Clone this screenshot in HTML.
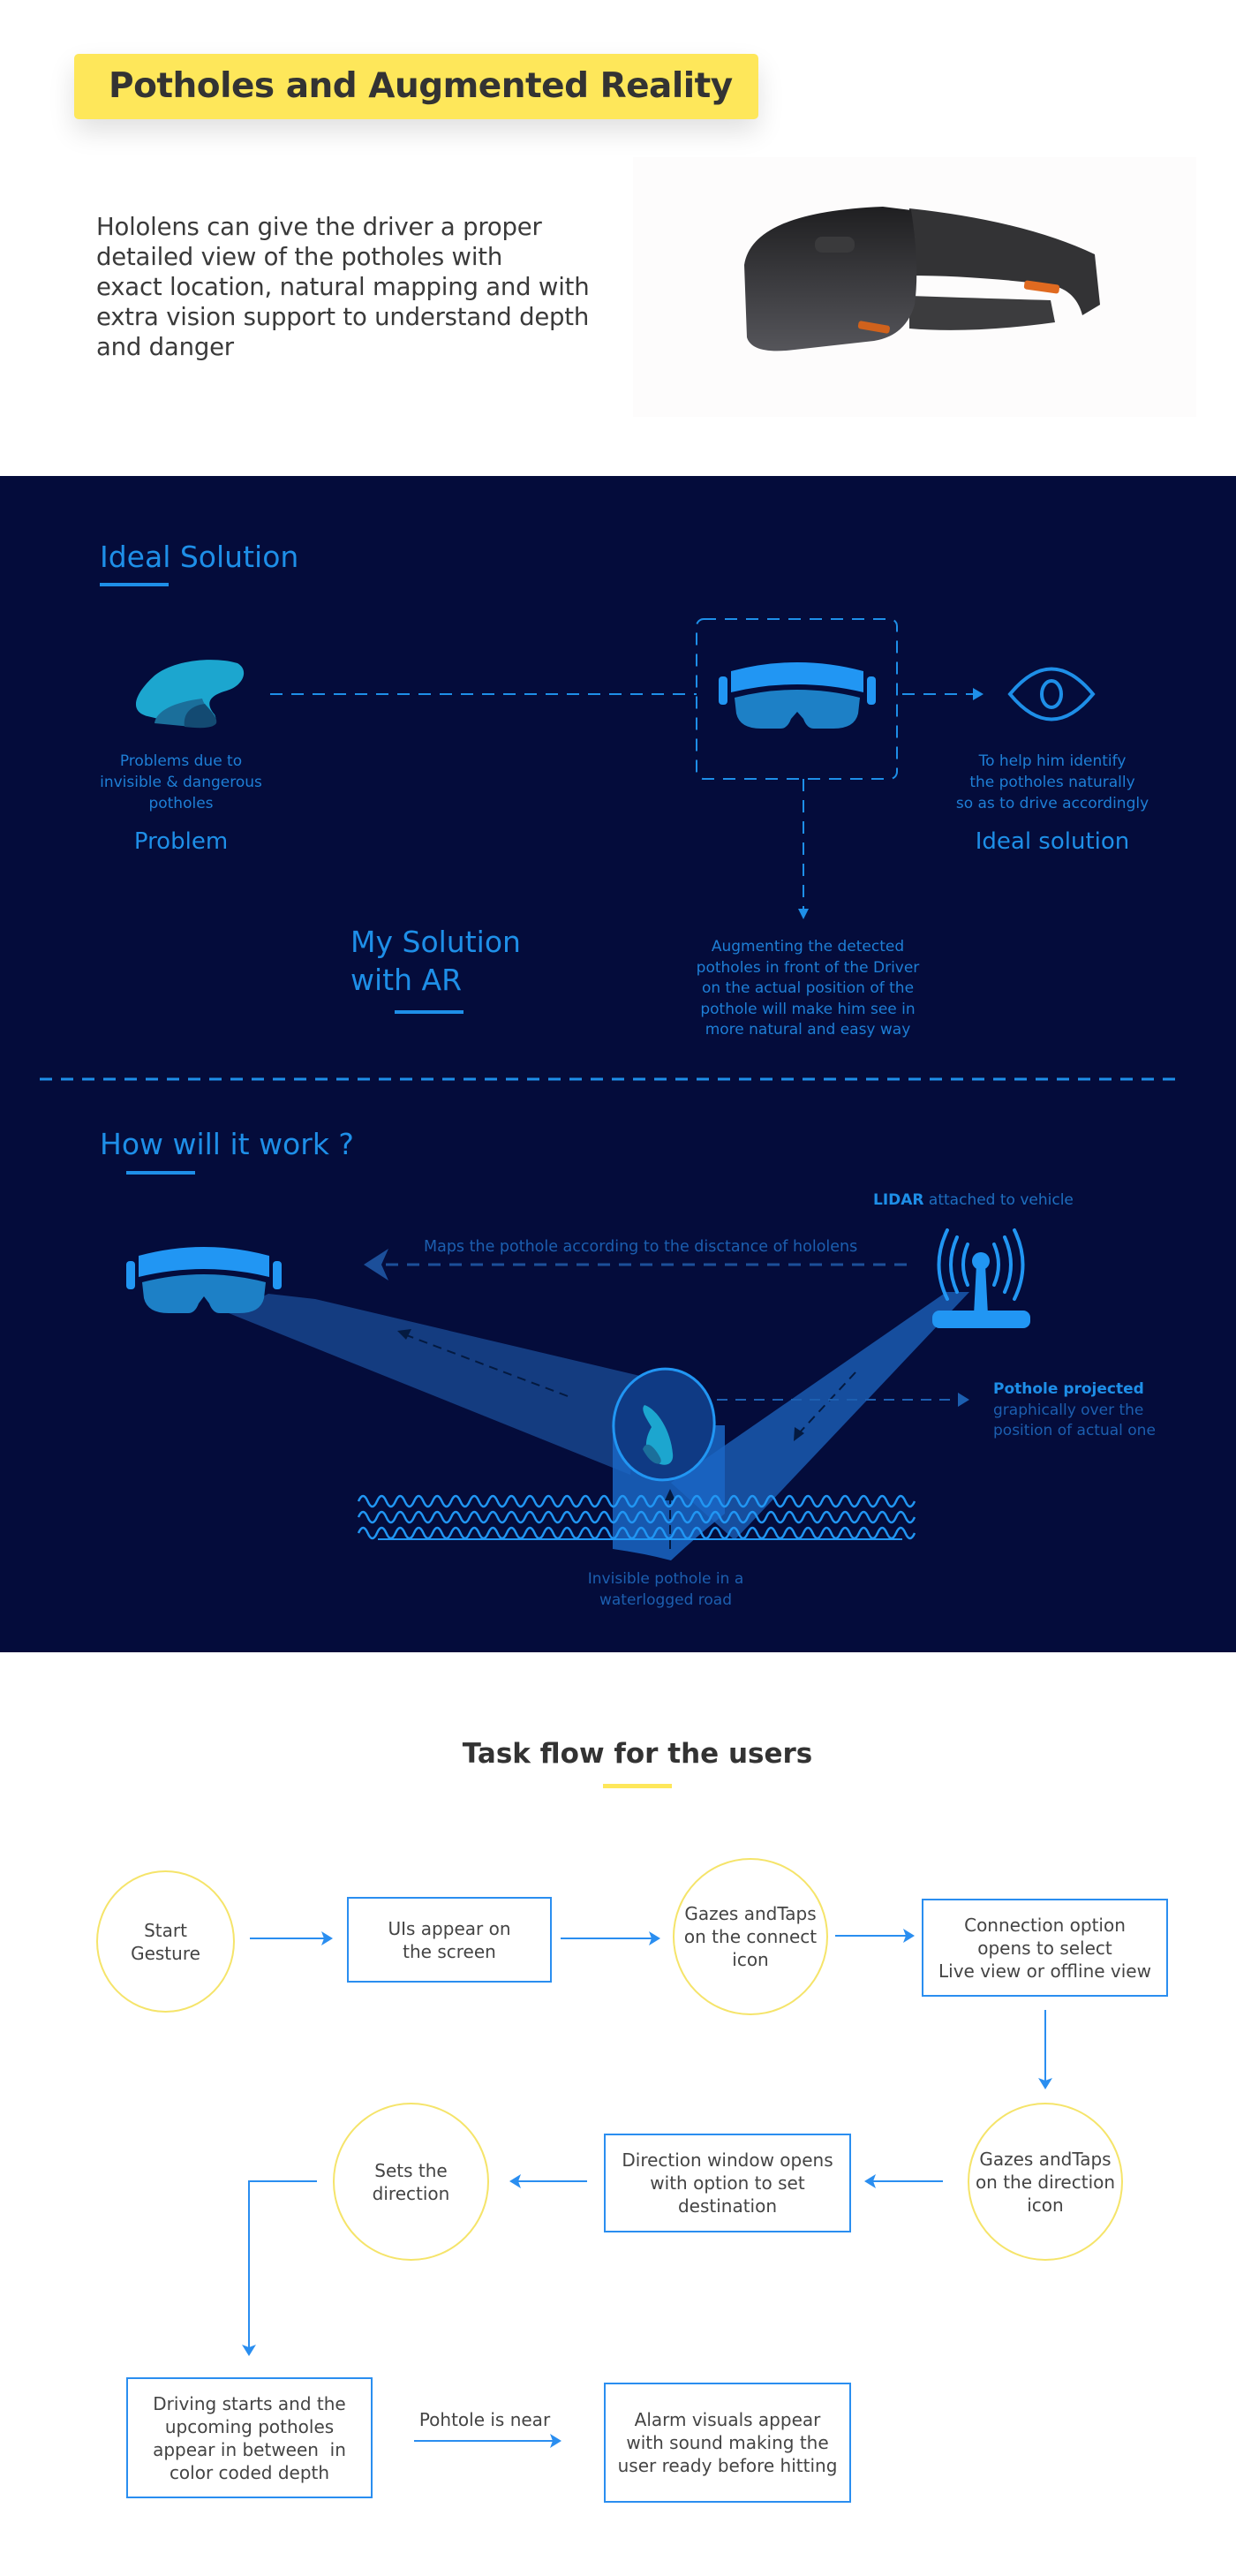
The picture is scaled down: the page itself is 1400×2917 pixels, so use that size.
<!DOCTYPE html>
<html><head><meta charset="utf-8"><style>
*{margin:0;padding:0;box-sizing:border-box}
body{width:1400px;height:2917px;background:#fff;position:relative;font-family:"DejaVu Sans","Liberation Sans",sans-serif;overflow:hidden}
.a{position:absolute}
.dark{position:absolute;left:0;top:539px;width:1400px;height:1332px;background:#040c3b}
.bl{color:#1e8fe8}
.t{position:absolute;text-align:center;font-size:17px;line-height:24px;color:#1e7fd6}
.fl{position:absolute;display:flex;align-items:center;justify-content:center;text-align:center;font-size:20px;line-height:26px;color:#444}
.box{border:2px solid #2a8ef0}
.cir{border:2px solid #f5e46a;border-radius:50%}
</style></head><body>

<div class="a" style="left:84px;top:61px;width:775px;height:74px;background:#fee75a;border-radius:5px;box-shadow:0 14px 30px rgba(0,0,0,0.12)"></div>
<div class="a" style="left:123px;top:72px;font-size:39px;font-weight:bold;color:#333;line-height:52px;letter-spacing:-0.5px">Potholes and Augmented Reality</div>

<div class="a" style="left:717px;top:178px;width:638px;height:294px;background:#fdfcfc"></div>
<div class="a" style="left:109px;top:240px;font-size:27.5px;line-height:34px;color:#3a3a3a;letter-spacing:-0.2px">Hololens can give the driver a proper<br>detailed view of the potholes with<br>exact location, natural mapping and with<br>extra vision support to understand depth<br>and danger</div>

<svg class="a" style="left:0;top:0" width="1400" height="540">
<defs><linearGradient id="vg" x1="0" y1="0" x2="0" y2="1"><stop offset="0" stop-color="#1f1f21"/><stop offset="1" stop-color="#55555a"/></linearGradient></defs>
<path d="M1030,236 Q1160,250 1240,288 L1246,345 L1226,357 Q1218,326 1185,322 Q1100,312 1030,312 Z" fill="#333335"/>
<path d="M1030,335 Q1120,338 1190,340 L1195,365 Q1100,378 1030,372 Z" fill="#3c3c3e"/>
<path d="M843,300 Q852,240 1000,234 L1032,238 Q1042,300 1036,345 Q1026,380 990,386 L900,396 Q852,402 846,382 Z" fill="url(#vg)"/>
<rect x="923" y="268" width="45" height="18" rx="8" fill="#3a3a3c"/>
<rect x="1160" y="320" width="40" height="10" rx="3" fill="#e06a20" transform="rotate(8 1180 325)"/>
<rect x="972" y="366" width="36" height="9" rx="3" fill="#d0621c" transform="rotate(10 990 370)"/>
</svg>

<div class="dark"></div>
<svg class="a" style="left:0;top:539px" width="1400" height="1332">
<g fill="none" stroke="#1e8fe8" stroke-width="2" stroke-dasharray="14 10">
<line x1="306" y1="247" x2="789" y2="247"/>
<line x1="1022" y1="247" x2="1105" y2="247"/>
<rect x="789" y="162" width="227" height="181" rx="8"/>
<line x1="910" y1="343" x2="910" y2="490"/>
<line x1="45" y1="683" x2="1339" y2="683" stroke-width="3"/>
</g>
<path d="M1102,240 L1114,247 L1102,254 Z" fill="#1e8fe8"/>
<path d="M904,490 L910,502 L916,490 Z" fill="#1e8fe8"/>
<rect x="113" y="121" width="78" height="4" fill="#1e8fe8"/>
<rect x="447" y="605" width="78" height="4" fill="#1e8fe8"/>
<rect x="143" y="787" width="78" height="4" fill="#1e8fe8"/>
<g transform="translate(147,208)">
<path d="M20,64 C-2,58 6,38 28,18 C50,0 95,-4 122,4 C136,12 128,30 110,35 C92,40 84,48 96,62 C102,74 90,78 70,76 Z" fill="#1ca6cf"/>
<path d="M28,72 C30,58 50,48 82,44 C84,52 92,58 96,64 C100,74 90,78 70,76 Z" fill="#1b6f9b"/>
<path d="M62,76 C60,60 70,52 85,50 C92,58 100,66 98,72 C94,78 80,78 62,76 Z" fill="#134a72"/>
</g>
<g transform="translate(814,209)">
<rect x="0" y="18" width="10" height="32" rx="4" fill="#2196f3"/><rect x="168" y="18" width="10" height="32" rx="4" fill="#2196f3"/>
<path d="M14,12 Q89,-8 164,12 L164,36 Q89,18 14,36 Z" fill="#2196f3"/>
<path d="M18,42 Q89,24 160,42 L158,60 Q154,77 130,77 L108,77 Q100,77 96,66 L89,58 L82,66 Q78,77 70,77 L48,77 Q24,77 20,60 Z" fill="#1d80c6"/>
</g>
<path d="M1144,247 Q1191,190 1238,247 Q1191,304 1144,247 Z" fill="none" stroke="#1e8fe8" stroke-width="4"/>
<ellipse cx="1191" cy="247" rx="11" ry="15" fill="none" stroke="#1e8fe8" stroke-width="4"/>

<path d="M259,948 L304,926 L357,932 L725,1019 L714,1131 Z" fill="#143c80"/>
<path d="M1072,924 L1098,924 L832,1205 L760,1140 Z" fill="#1a5ab0" opacity="0.85"/>
<path d="M694,1075 L821,1075 L821,1175 Q790,1200 760,1228 Q730,1220 694,1215 Z" fill="#1a66c4" opacity="0.85"/>
<ellipse cx="752" cy="1074" rx="57" ry="63" transform="rotate(8 752 1074)" fill="#0f3a84" stroke="#2196f3" stroke-width="3"/>
<g transform="translate(0,52)">
<path d="M730,1000 C745,1005 760,1030 762,1055 C764,1070 748,1072 738,1060 C728,1050 732,1035 738,1025 C732,1015 725,1005 730,1000 Z" fill="#1ca6cf"/>
<path d="M728,1050 C732,1040 740,1045 748,1060 C752,1070 738,1070 728,1050 Z" fill="#1b6f9b"/>
</g>
<g fill="none" stroke="#041a40" stroke-width="2" stroke-dasharray="10 7">
<line x1="643" y1="1042" x2="458" y2="972"/>
<line x1="969" y1="1015" x2="904" y2="1085"/>
<line x1="759" y1="1215" x2="759" y2="1158"/>
</g>
<path d="M450,968 L466,966 L460,978 Z" fill="#041a40"/>
<path d="M899,1093 L900,1077 L911,1084 Z" fill="#041a40"/>
<path d="M753,1160 L759,1147 L765,1160 Z" fill="#041a40"/>
<g fill="none" stroke="#1c4f9a" stroke-width="3" stroke-dasharray="14 10">
<line x1="437" y1="893" x2="1034" y2="893"/>
</g>
<path d="M412,893 L440,875 L432,893 L440,911 Z" fill="#1c4f9a"/>
<g fill="none" stroke="#1c5fb0" stroke-width="2" stroke-dasharray="12 9">
<line x1="812" y1="1046" x2="1090" y2="1046"/>
</g>
<path d="M1085,1038 L1098,1046 L1085,1054 Z" fill="#1c5fb0"/>
<g fill="none" stroke="#2196f3" stroke-width="2.5" id="w">
<path d="M406,1161 q5.25,-12 10.5,0 t10.5,0 t10.5,0 t10.5,0 t10.5,0 t10.5,0 t10.5,0 t10.5,0 t10.5,0 t10.5,0 t10.5,0 t10.5,0 t10.5,0 t10.5,0 t10.5,0 t10.5,0 t10.5,0 t10.5,0 t10.5,0 t10.5,0 t10.5,0 t10.5,0 t10.5,0 t10.5,0 t10.5,0 t10.5,0 t10.5,0 t10.5,0 t10.5,0 t10.5,0 t10.5,0 t10.5,0 t10.5,0 t10.5,0 t10.5,0 t10.5,0 t10.5,0 t10.5,0 t10.5,0 t10.5,0 t10.5,0 t10.5,0 t10.5,0 t10.5,0 t10.5,0 t10.5,0 t10.5,0 t10.5,0 t10.5,0 t10.5,0 t10.5,0 t10.5,0 t10.5,0 t10.5,0 t10.5,0 t10.5,0 t10.5,0 t10.5,0 t10.5,0 t10.5,0"/>
</g>
<use href="#w" y="18"/><use href="#w" y="36"/>
<line x1="428" y1="1204" x2="1022" y2="1204" stroke="#2196f3" stroke-width="2"/>
<g transform="translate(143,871)">
<rect x="0" y="18" width="10" height="32" rx="4" fill="#2196f3"/><rect x="166" y="18" width="10" height="32" rx="4" fill="#2196f3"/>
<path d="M14,12 Q88,-8 162,12 L162,36 Q88,18 14,36 Z" fill="#2196f3"/>
<path d="M18,42 Q88,24 158,42 L156,60 Q152,77 128,77 L106,77 Q98,77 94,66 L88,58 L82,66 Q78,77 70,77 L48,77 Q24,77 20,60 Z" fill="#1d80c6"/>
</g>
<g fill="none" stroke="#2196f3" stroke-width="4" stroke-linecap="round">
<path d="M1096,870 Q1086,893 1096,916"/><path d="M1084,862 Q1070,893 1084,924"/><path d="M1073,854 Q1054,893 1073,932"/>
<path d="M1126,870 Q1136,893 1126,916"/><path d="M1138,862 Q1152,893 1138,924"/><path d="M1149,854 Q1168,893 1149,932"/>
</g>
<circle cx="1111" cy="889" r="10" fill="#2196f3"/>
<path d="M1106,893 L1116,893 L1119,950 L1103,950 Z" fill="#2196f3"/>
<rect x="1056" y="945" width="111" height="20" rx="8" fill="#2196f3"/>
</svg>

<div class="a bl" style="left:113px;top:609px;font-size:33px;line-height:44px">Ideal Solution</div>
<div class="t" style="left:75px;top:850px;width:260px">Problems due to<br>invisible &amp; dangerous<br>potholes</div>
<div class="a bl" style="left:85px;top:935px;width:240px;text-align:center;font-size:26px;line-height:36px">Problem</div>
<div class="t" style="left:1042px;top:850px;width:300px">To help him identify<br>the potholes naturally<br>so as to drive accordingly</div>
<div class="a bl" style="left:1042px;top:935px;width:300px;text-align:center;font-size:26px;line-height:36px">Ideal solution</div>
<div class="a bl" style="left:397px;top:1045px;font-size:33px;line-height:43px">My Solution<br>with AR</div>
<div class="t" style="left:760px;top:1061px;width:310px;line-height:23.5px">Augmenting the detected<br>potholes in front of the Driver<br>on the actual position of the<br>pothole will make him see in<br>more natural and easy way</div>
<div class="a bl" style="left:113px;top:1274px;font-size:33px;line-height:44px">How will it work ?</div>
<div class="a" style="left:989px;top:1349px;font-size:17px;color:#1e6fc0"><b style="color:#1e8fe8">LIDAR</b> attached to vehicle</div>
<div class="a" style="left:480px;top:1402px;font-size:17.5px;color:#1c5fb0">Maps the pothole according to the disctance of hololens</div>
<div class="a" style="left:1125px;top:1562px;font-size:17px;line-height:23.5px;color:#1c5fb0"><b style="color:#1e8fe8">Pothole projected</b><br>graphically over the<br>position of actual one</div>
<div class="t" style="left:604px;top:1776px;width:300px;color:#1c5fb0">Invisible pothole in a<br>waterlogged road</div>

<div class="a" style="left:222px;top:1964px;width:1000px;text-align:center;font-size:31px;font-weight:bold;color:#333;line-height:44px">Task flow for the users</div>
<div class="a" style="left:683px;top:2020px;width:78px;height:5px;background:#fee75a"></div>

<div class="fl cir" style="left:109px;top:2118px;width:157px;height:161px">Start<br>Gesture</div>
<div class="fl box" style="left:393px;top:2148px;width:232px;height:97px">UIs appear on<br>the screen</div>
<div class="fl cir" style="left:762px;top:2104px;width:176px;height:178px;white-space:nowrap">Gazes andTaps<br>on the connect<br>icon</div>
<div class="fl box" style="left:1044px;top:2150px;width:279px;height:111px;white-space:nowrap">Connection option<br>opens to select<br>Live view or offline view</div>
<div class="fl cir" style="left:1096px;top:2381px;width:176px;height:179px;white-space:nowrap">Gazes andTaps<br>on the direction<br>icon</div>
<div class="fl box" style="left:684px;top:2416px;width:280px;height:112px;white-space:nowrap">Direction window opens<br>with option to set<br>destination</div>
<div class="fl cir" style="left:377px;top:2381px;width:177px;height:179px">Sets the<br>direction</div>
<div class="fl box" style="left:143px;top:2692px;width:279px;height:137px;white-space:nowrap">Driving starts and the<br>upcoming potholes<br>appear in between &nbsp;in<br>color coded depth</div>
<div class="fl box" style="left:684px;top:2698px;width:280px;height:136px;white-space:nowrap">Alarm visuals appear<br>with sound making the<br>user ready before hitting</div>
<div class="a" style="left:449px;top:2728px;width:200px;text-align:center;font-size:20px;color:#444">Pohtole is near</div>

<svg class="a" style="left:0;top:2000px" width="1400" height="917">
<g stroke="#2a8ef0" stroke-width="2" fill="none">
<line x1="283" y1="195" x2="372" y2="195"/>
<line x1="635" y1="195" x2="743" y2="195"/>
<line x1="946" y1="192" x2="1031" y2="192"/>
<line x1="1184" y1="276" x2="1184" y2="361"/>
<line x1="984" y1="470" x2="1068" y2="470"/>
<line x1="582" y1="470" x2="665" y2="470"/>
<polyline points="359,470 282,470 282,663"/>
<line x1="469" y1="764" x2="631" y2="764"/>
</g>
<g fill="#2a8ef0">
<path d="M377,195 L364,187 L367,195 L364,203 Z"/>
<path d="M748,195 L735,187 L738,195 L735,203 Z"/>
<path d="M1036,192 L1023,184 L1026,192 L1023,200 Z"/>
<path d="M1184,366 L1176,353 L1184,356 L1192,353 Z"/>
<path d="M979,470 L992,462 L989,470 L992,478 Z"/>
<path d="M577,470 L590,462 L587,470 L590,478 Z"/>
<path d="M282,668 L274,655 L282,658 L290,655 Z"/>
<path d="M636,764 L623,756 L626,764 L623,772 Z"/>
</g>
</svg>
</body></html>
